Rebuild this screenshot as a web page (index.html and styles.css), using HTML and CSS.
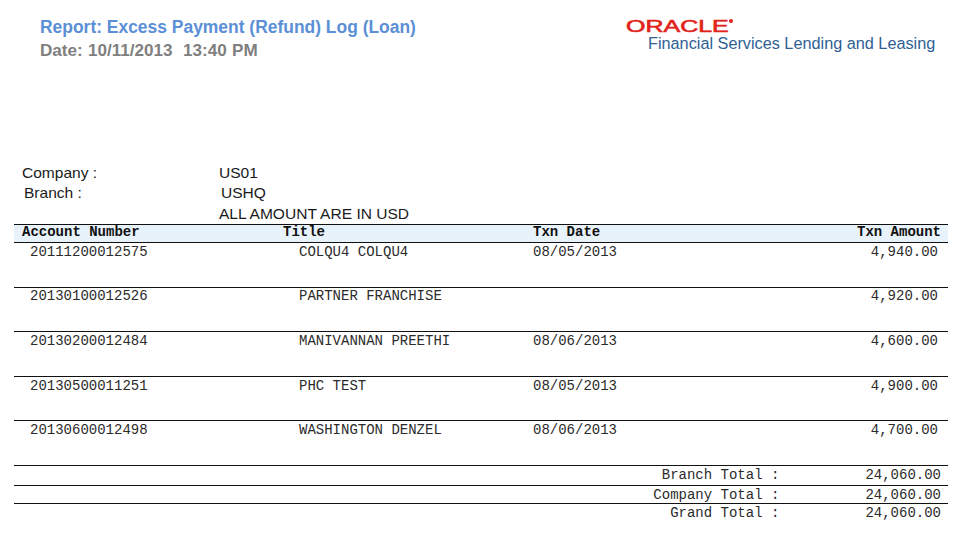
FILE: index.html
```html
<!DOCTYPE html>
<html lang="en">
<head>
<meta charset="utf-8">
<title>Excess Payment (Refund) Log (Loan)</title>
<link rel="stylesheet" href="styles.css">
</head>
<body>
<div class="page">
  <header class="masthead">
    <div class="report-id">
      <div class="report-title">Report: Excess Payment (Refund) Log (Loan)</div>
      <div class="report-date">Date: 10/11/2013&nbsp; 13:40 PM</div>
    </div>
    <div class="brand">
      <div class="brand-mark"><span class="brand-word">ORACLE</span><span class="brand-dot"></span></div>
      <div class="brand-sub">Financial Services Lending and Leasing</div>
    </div>
  </header>
  <section class="meta">
    <div class="meta-row"><span class="meta-label">Company :</span><span>US01</span></div>
    <div class="meta-row meta-row-branch"><span class="meta-label">Branch :</span><span>USHQ</span></div>
    <div class="meta-row meta-row-note"><span class="meta-label"></span><span>ALL AMOUNT ARE IN USD</span></div>
  </section>
  <section class="report">
    <div class="row head">
      <span>Account Number</span><span>Title</span><span>Txn Date</span><span class="c-amt">Txn Amount</span>
    </div>
    <div class="row item"><span>20111200012575</span><span>COLQU4 COLQU4</span><span>08/05/2013</span><span class="c-amt">4,940.00</span></div>
    <div class="row item item-short item-raised"><span>20130100012526</span><span>PARTNER FRANCHISE</span><span></span><span class="c-amt">4,920.00</span></div>
    <div class="row item"><span>20130200012484</span><span>MANIVANNAN PREETHI</span><span>08/06/2013</span><span class="c-amt">4,600.00</span></div>
    <div class="row item item-short"><span>20130500011251</span><span>PHC TEST</span><span>08/05/2013</span><span class="c-amt">4,900.00</span></div>
    <div class="row item"><span>20130600012498</span><span>WASHINGTON DENZEL</span><span>08/06/2013</span><span class="c-amt">4,700.00</span></div>
    <div class="total total-branch"><span class="t-label">Branch Total :</span><span>24,060.00</span></div>
    <div class="total total-company"><span class="t-label">Company Total :</span><span>24,060.00</span></div>
    <div class="total total-grand"><span class="t-label">Grand Total :</span><span>24,060.00</span></div>
  </section>
</div>
</body>
</html>
```
FILE: styles.css
```css
html, body { margin: 0; padding: 0; background: #fff; }
body { width: 966px; height: 540px; overflow: hidden; font-family: "Liberation Sans", Arial, sans-serif; }
.page { display: flex; flex-direction: column; }
.masthead { display: flex; justify-content: space-between; height: 163px; padding: 17px 30px 0 40px; box-sizing: border-box; }
.report-title { font-size: 17.45px; line-height: 20px; font-weight: bold; color: #5b8fd6; }
.report-date { font-size: 17.1px; line-height: 27px; font-weight: bold; color: #7f7f7f; word-spacing: 0.5px; }
.brand { display: flex; flex-direction: column; width: 310px; margin-top: 1px; }
.brand-mark { display: flex; height: 16px; position: relative; }
.brand-word { font-size: 17px; line-height: 17px; height: 17px; color: #e2231a; -webkit-text-stroke: 0.6px #e2231a; transform: scaleX(1.47); transform-origin: left center; }
.brand-dot { position: absolute; left: 103px; top: 1px; width: 4px; height: 4px; border-radius: 50%; background: #e2231a; }
.brand-sub { font-size: 16.25px; line-height: 18px; color: #2f6094; padding-left: 22px; white-space: nowrap; }
.meta { display: flex; flex-direction: column; font-size: 15.55px; color: #1a1a1a; padding-left: 22px; }
.meta-row { display: flex; height: 20px; line-height: 20px; }
.meta-label { width: 197px; }
.meta-row-branch { padding-left: 2px; }
.meta-row-note { padding-top: 1px; }
.report { margin-left: 14px; width: 934px; font-family: "Liberation Mono", "Courier New", monospace; font-size: 14px; color: #2b2b2b; }
.row { display: grid; box-sizing: border-box; }
.c-amt { text-align: right; }
.head { grid-template-columns: 261px 250px 1fr 122px; height: 19px; line-height: 14px; font-weight: bold; color: #111; background: #e8f2fb; border-top: 1px solid #111; border-bottom: 1px solid #111; padding: 0 7px 0 8px; }
.item { grid-template-columns: 269px 234px 1fr 122px; height: 45px; line-height: 16px; padding: 1px 10px 0 16px; border-bottom: 1px solid #111; }
.item-short { height: 44px; }
.item-raised { padding-top: 0; }
.total { display: flex; justify-content: flex-end; box-sizing: border-box; line-height: 16px; padding-right: 7px; border-bottom: 1px solid #111; }
.total-branch { height: 20px; padding-top: 1px; }
.total-company { height: 18px; padding-top: 1px; }
.total-grand { height: 18px; padding-top: 1px; border-bottom: 0; }
.t-label { margin-right: 86px; }
```
